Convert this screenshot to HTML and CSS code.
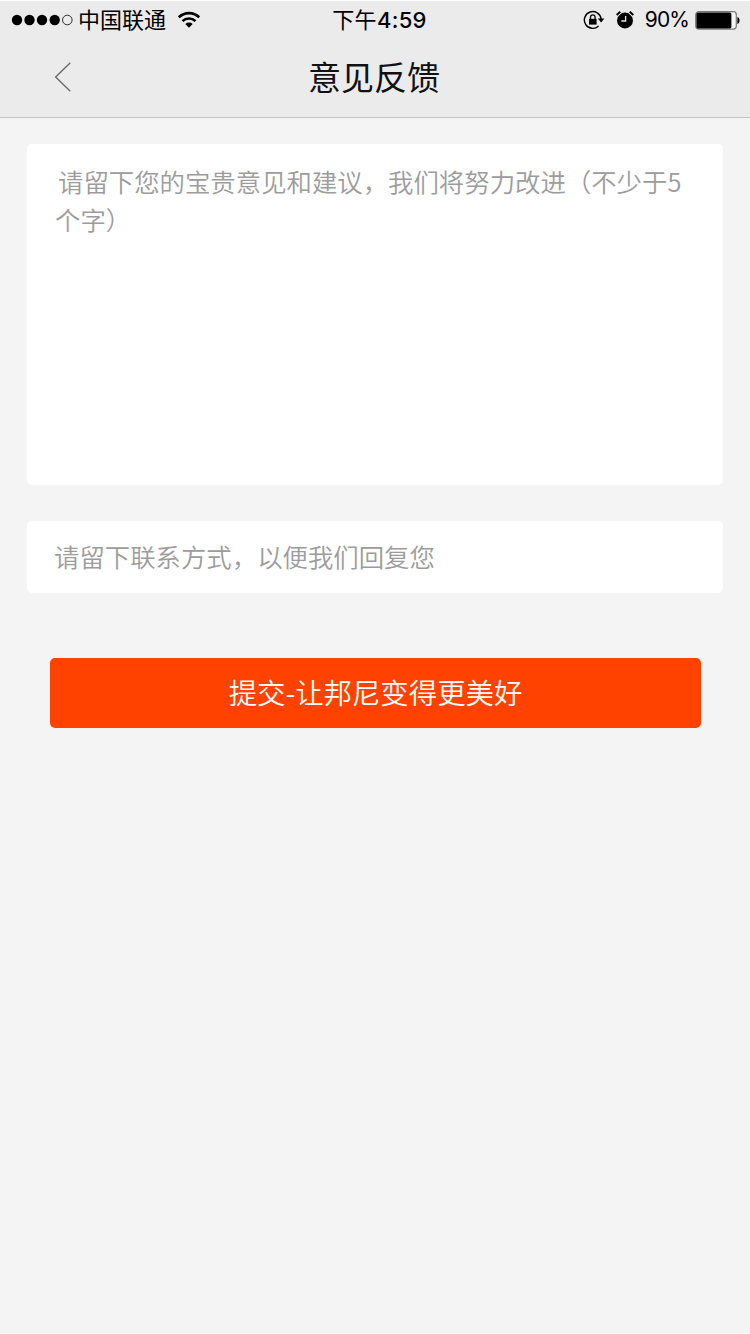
FILE: index.html
```html
<!DOCTYPE html>
<html lang="zh-CN">
<head>
  <meta charset="UTF-8">
  <meta name="viewport" content="width=device-width, initial-scale=1.0">
  <title>意见反馈</title>
  <link rel="stylesheet" href="styles.css">
</head>
<body>
  <header class="header">
    <div class="status-bar">
      <div class="status-left">
        <svg class="signal" width="62" height="12" viewBox="0 0 62 12">
          <circle cx="6" cy="6" r="5.2"/>
          <circle cx="18.5" cy="6" r="5.2"/>
          <circle cx="31" cy="6" r="5.2"/>
          <circle cx="43.7" cy="6" r="5.2"/>
          <circle cx="56.3" cy="6" r="4.8" fill="none" stroke="#000" stroke-width="0.8"/>
        </svg>
        <span class="carrier">中国联通</span>
        <svg class="wifi" width="24" height="18" viewBox="0 0 24 18">
          <path d="M1.8 6.3a14.6 14.6 0 0 1 20.4 0" fill="none" stroke="#000" stroke-width="2.6"/>
          <path d="M5.5 10.1a9.3 9.3 0 0 1 13 0" fill="none" stroke="#000" stroke-width="2.6"/>
          <path d="M8.3 13a5.4 5.4 0 0 1 7.4 0L12 16.8z"/>
        </svg>
      </div>
      <span class="time"><span class="period">下午</span>4:59</span>
      <div class="status-right">
        <svg class="lock" width="22" height="20" viewBox="0 0 22 20">
          <path d="M18.1 9A8.4 8.4 0 1 0 15.6 16" fill="none" stroke="#000" stroke-width="1.4"/>
          <path d="M14.8 8.6h6.6l-3.3 4z"/>
          <path d="M6 8.8h7.6v5.8H6z"/>
          <path d="M7.5 9.3V7.2a2.3 2.3 0 0 1 4.6 0v2.1" fill="none" stroke="#000" stroke-width="1.3"/>
        </svg>
        <svg class="alarm" width="18" height="18" viewBox="0 0 18 18">
          <circle cx="9" cy="9.4" r="8"/>
          <path d="M.7 4.5L4.3 1M17.3 4.5L13.7 1" fill="none" stroke="#ebebec" stroke-width="3.4"/>
          <path d="M.7 4.1L4.3 .8M17.3 4.1L13.7 .8" fill="none" stroke="#000" stroke-width="2"/>
          <path d="M9.6 5v5H5.4" fill="none" stroke="#ebebec" stroke-width="1.3"/>
        </svg>
        <span class="percent">90%</span>
        <svg class="battery" width="45" height="19" viewBox="0 0 45 19">
          <rect x=".7" y=".7" width="40.6" height="17.4" rx="3" fill="#f5f5f5" stroke="#777" stroke-width="1.2"/>
          <rect x="1.4" y="1.4" width="35" height="16" rx="1.6"/>
          <path d="M42.4 6c2.8.8 2.8 6.2 0 7z"/>
        </svg>
      </div>
    </div>
    <div class="nav-bar">
      <a class="back" href="#" aria-label="返回">
        <svg width="18" height="32" viewBox="0 0 18 32">
          <path d="M16.3 1.8L1.6 16l14.7 14.2" fill="none" stroke="#666" stroke-width="1.3"/>
        </svg>
      </a>
      <h1 class="title">意见反馈</h1>
    </div>
  </header>

  <form class="feedback-form">
    <textarea class="field message" placeholder="请留下您的宝贵意见和建议，我们将努力改进（不少于5&#10;个字）"></textarea>
    <input class="field contact" type="text" placeholder="请留下联系方式，以便我们回复您">
    <button class="submit" type="button">提交-让邦尼变得更美好</button>
  </form>
</body>
</html>
```

FILE: styles.css
```css
* {
  box-sizing: border-box;
}
body {
  margin: 0;
  min-height: 1334px;
  border-bottom: 1px solid #fcfcfc;
  background-color: #f4f4f4;
  font-family: "Noto Sans CJK SC", sans-serif;
}

/* Header */
.header {
  height: 118px;
  background-color: #ebebec;
  border-top: 1px solid #fff;
  border-bottom: 1px solid #c6c6c7;
}
.status-bar {
  display: grid;
  grid-template-columns: 1fr auto 1fr;
  align-items: center;
  height: 38px;
  padding: 0 10px 0 11px;
  font-size: 22px;
  line-height: 38px;
  color: #000;
}
.status-left, .status-right {
  display: flex;
  align-items: center;
}
.status-right {
  justify-content: flex-end;
}
.carrier {
  height: 38px;
  margin: 0 11px 0 5px;
  line-height: 35px;
}
.time {
  font-family: Inter, "Noto Sans CJK SC", sans-serif;
  font-weight: 500;
  letter-spacing: 0.3px;
  margin-left: 8px;
}
.period {
  font-weight: 400;
}
.alarm {
  margin: 0 11px 0 11px;
}
.percent {
  font-family: Inter, sans-serif;
  font-size: 21px;
  letter-spacing: -0.9px;
  margin-right: 6px;
}

/* Title bar */
.nav-bar {
  display: grid;
  grid-template-columns: 100px 1fr 102px;
  align-items: center;
  height: 76px;
}
.back {
  display: flex;
  padding-left: 54px;
}
.title {
  height: 76px;
  margin: 0;
  font-size: 33px;
  font-weight: 400;
  line-height: 74px;
  text-align: center;
  color: #111;
}

/* Feedback form */
.feedback-form {
  display: flex;
  flex-direction: column;
  padding: 26px 27px 0;
}
.field {
  display: block;
  width: 100%;
  border: none;
  border-radius: 5px;
  outline: none;
  resize: none;
  background-color: #fff;
  font-family: "Noto Sans CJK SC DemiLight", "Noto Sans CJK SC", sans-serif;
  font-size: 25.4px;
  font-weight: 350;
  color: #333;
}
.field::placeholder {
  color: #9c9c9c;
  opacity: 1;
}
.message {
  height: 341px;
  padding: 18px 20px 19px 28px;
  line-height: 38px;
  text-indent: 3px;
  overflow: hidden;
}
.contact {
  height: 72px;
  margin-top: 36px;
  padding: 0 27px 2px;
}
.submit {
  height: 70px;
  margin: 65px 22px 0 23px;
  padding: 0 0 3px;
  border: none;
  border-radius: 5px;
  background-color: #ff4200;
  font-family: "Noto Sans CJK SC DemiLight", "Noto Sans CJK SC", sans-serif;
  font-size: 28.4px;
  font-weight: 350;
  color: #fff;
}
```
